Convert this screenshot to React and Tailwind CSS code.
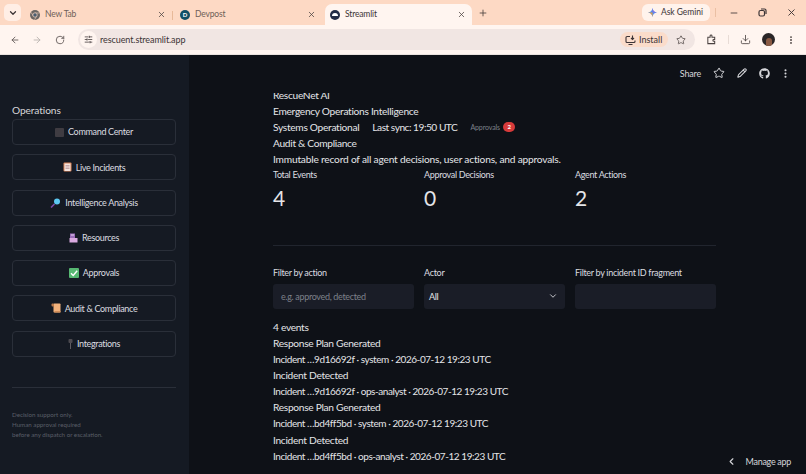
import React from 'react';
import { ArrowLeft, ArrowRight, RotateCw, X, Plus, Star, Pencil, ChevronDown, ChevronLeft, EllipsisVertical, Minus, Download, SlidersHorizontal } from 'lucide-react';
import { FaGithub } from 'react-icons/fa';

function ChromeLogo() {
  return (
    <svg width="10" height="10" viewBox="0 0 10 10">
      <circle cx="5" cy="5" r="5" fill="#6a6563" />
      <path d="M5 3h4.400M3.300 6 1.100 2.300M6.700 6 4.500 9.800" stroke="#fdd9c4" strokeWidth="0.6" />
      <circle cx="5" cy="5" r="2.200" fill="#4a5d70" stroke="#fdd9c4" strokeWidth="0.7" />
    </svg>
  );
}

function Square() {
  return <span className="w-[9px] h-[9px] rounded-[1px] bg-[#3f3c42]" />;
}

function Clipboard() {
  return (
    <svg width="9" height="10" viewBox="0 0 9 10">
      <rect x="0.5" y="0.5" width="8" height="9" rx="1" fill="#d9845a" />
      <rect x="1.5" y="1.5" width="6" height="7.5" fill="#f3e3dc" />
      <path d="M2.5 3.5h4M2.5 5h4M2.5 6.5h4" stroke="#b08a90" strokeWidth="0.7" />
    </svg>
  );
}

function Magnifier() {
  return (
    <svg width="11" height="10" viewBox="0 0 11 10">
      <path d="M1 9.5 4.5 6" stroke="#7d4aa8" strokeWidth="1.6" />
      <circle cx="7" cy="3.5" r="3" fill="#5cc8f2" />
    </svg>
  );
}

function Books() {
  return (
    <svg width="9" height="10" viewBox="0 0 9 10">
      <rect x="1" y="0.5" width="5" height="4.5" fill="#9a6bb8" />
      <rect x="0.5" y="5" width="8" height="4.5" fill="#d9a9e0" />
      <rect x="2" y="1.5" width="3" height="1" fill="#e6d2ee" />
    </svg>
  );
}

function Check() {
  return (
    <svg width="10" height="10" viewBox="0 0 10 10">
      <rect width="10" height="10" rx="1" fill="#57b872" />
      <path d="M2 5.2 4.2 7.4 8.2 2.8" stroke="#fff" strokeWidth="1.4" fill="none" />
    </svg>
  );
}

function Scroll() {
  return (
    <svg width="10" height="10" viewBox="0 0 10 10">
      <rect x="2.5" y="0.5" width="7" height="9" rx="0.8" fill="#f2b27c" />
      <rect x="0.5" y="0.5" width="2.5" height="3" rx="1" fill="#b9794a" />
      <rect x="3.5" y="8" width="6" height="1.5" fill="#d08c58" />
    </svg>
  );
}

function Pin() {
  return (
    <svg width="5" height="10" viewBox="0 0 5 10">
      <rect x="0.5" y="0" width="4" height="4" rx="1" fill="#4d4a50" />
      <rect x="2" y="4" width="1" height="6" fill="#5d5a60" />
    </svg>
  );
}

const navItems = [
  ['Command Center', <Square />],
  ['Live Incidents', <Clipboard />],
  ['Intelligence Analysis', <Magnifier />],
  ['Resources', <Books />],
  ['Approvals', <Check />],
  ['Audit & Compliance', <Scroll />],
  ['Integrations', <Pin />],
];

const events = [
  'Response Plan Generated',
  'Incident …9d16692f · system · 2026-07-12 19:23 UTC',
  'Incident Detected',
  'Incident …9d16692f · ops-analyst · 2026-07-12 19:23 UTC',
  'Response Plan Generated',
  'Incident …bd4ff5bd · system · 2026-07-12 19:23 UTC',
  'Incident Detected',
  'Incident …bd4ff5bd · ops-analyst · 2026-07-12 19:23 UTC',
];

function Tab({ icon, title, active }) {
  return (
    <div className={`w-[147px] h-[21px] flex items-center pl-[5px] pr-[6px] rounded-t-[7px] ${active ? 'bg-[#fff5f0] text-[#3c3436]' : 'text-[#6f5f58]'}`}>
      {icon}
      <span className="ml-[5px] flex-1 text-[8.5px] tracking-[-0.15px]">{title}</span>
      <X size={9} strokeWidth={2} className="text-[#4a4240]" />
    </div>
  );
}

function Line({ children, className = '' }) {
  return <div className={`h-[16.1px] leading-[16.1px] text-[#e4e5e8] whitespace-nowrap ${className}`}>{children}</div>;
}

function Metric({ label, value }) {
  return (
    <div>
      <div className="h-[16px] leading-[16px] text-[9px] tracking-[-0.33px] text-[#dcdde0]">{label}</div>
      <div className="h-[29px] leading-[29px] text-[21px] text-[#e4e5e8]">{value}</div>
    </div>
  );
}

function Field({ label, children }) {
  return (
    <div>
      <div className="h-[15px] leading-[15px] text-[9px] tracking-[-0.3px] text-[#dcdde0]">{label}</div>
      <div className="mt-[3.5px] h-[25px] rounded-[3px] bg-[#1a1d27] flex items-center text-[9px] tracking-[-0.33px]">{children}</div>
    </div>
  );
}

export default function App() {
  return (
    <div className="w-[806px] h-[474px] flex flex-col overflow-hidden bg-[#0e1117] font-['Lato',sans-serif]">
      <div className="h-[25px] bg-[#fdd9c4] flex items-end pl-[4px]">
        <div className="self-start mt-[4px] w-[17px] h-[17px] rounded-[5px] bg-[#ffeee5] flex items-center justify-center">
          <ChevronDown size={10} strokeWidth={3} className="text-[#3c3436]" />
        </div>
        <div className="ml-[4px] flex">
          <Tab title="New Tab" icon={<ChromeLogo />} />
          <div className="w-[1px] h-[9px] mt-[7px] mr-[2px] bg-[#e8b999]" />
          <Tab title="Devpost" icon={<span className="w-[10px] h-[10px] rounded-full bg-[#0f4f66] text-white text-[6px] font-bold flex items-center justify-center">D</span>} />
          <div className="w-[3px]" />
          <Tab active title="Streamlit" icon={<span className="w-[10px] h-[10px] rounded-full bg-[#222b45] flex items-center justify-center"><span className="w-[6px] h-[3px] rounded-t-full bg-white" /></span>} />
        </div>
        <Plus size={10} strokeWidth={2} className="self-start mt-[8px] ml-[6px] text-[#4a4240]" />
        <div className="flex-1" />
        <div className="self-start mt-[4px] w-[68px] h-[17px] rounded-[6px] bg-[#fff3ec] flex items-center pl-[6px] gap-[4px] text-[8.5px] tracking-[-0.05px] text-[#3c3436]">
          <svg width="9" height="9" viewBox="0 0 10 10">
            <path d="M5 0C5.4 3 7 4.6 10 5 7 5.4 5.4 7 5 10 4.6 7 3 5.4 0 5 3 4.6 4.6 3 5 0Z" fill="#4a8ef0" />
            <path d="M5 0C5.4 3 7 4.6 10 5H5Z" fill="#8c6ee0" />
            <path d="M5 10C4.6 7 3 5.4 0 5H5Z" fill="#e8a040" />
          </svg>
          Ask Gemini
        </div>
        <div className="self-start mt-[8px] ml-[5px] w-[1px] h-[9px] bg-[#eabfa3]" />
        <div className="self-start mt-[7px] flex items-center text-[#3c3436]">
          <Minus size={10} strokeWidth={2} className="ml-[13px]" />
          <svg width="9" height="9" viewBox="0 0 9 9" className="ml-[19px]" fill="none" stroke="currentColor" strokeWidth="1.2">
            <rect x="1" y="2.5" width="5.5" height="5.5" rx="1.5" />
            <path d="M3 1h3.5A1.5 1.5 0 0 1 8 2.500V6" />
          </svg>
          <X size={11} strokeWidth={2} className="ml-[19px] mr-[9px]" />
        </div>
      </div>

      <div className="h-[30px] bg-[#fff5f0] flex items-center pl-[10px] border-b border-[#e9e2de]">
        <ArrowLeft size={10} strokeWidth={2} className="text-[#5a5250]" />
        <ArrowRight size={10} strokeWidth={2} className="ml-[12px] text-[#b5aeab]" />
        <RotateCw size={10} strokeWidth={2} className="ml-[13px] text-[#5a5250]" />
        <div className="ml-[13px] w-[617px] h-[21px] rounded-full bg-[#f1e6e3] flex items-center pl-[2px] pr-[9px]">
          <div className="w-[17px] h-[17px] rounded-full bg-[#fff5f0] flex items-center justify-center">
            <SlidersHorizontal size={9} strokeWidth={2} className="text-[#3c3436]" />
          </div>
          <span className="ml-[3px] text-[9px] tracking-[-0.08px] text-[#3c3436]">rescuent.streamlit.app</span>
          <div className="flex-1" />
          <div className="w-[48px] h-[15px] rounded-full bg-[#fbdcca] flex items-center pl-[5px] gap-[3px] text-[9px] text-[#3c3436]">
            <svg width="11" height="10" viewBox="0 0 11 10" fill="none" stroke="currentColor" strokeWidth="1.1">
              <path d="M5 1.500H2a1 1 0 0 0-1 1v4a1 1 0 0 0 1 1h7a1 1 0 0 0 1-1V5.500M3.500 9.500h4M7.500 0.500v4M6 3l1.500 1.500L9 3" />
            </svg>
            Install
          </div>
          <Star size={10} strokeWidth={1.8} className="ml-[8px] text-[#4a4240]" />
        </div>
        <svg width="11" height="11" viewBox="0 0 24 24" fill="none" stroke="#4a4240" strokeWidth="2.200" className="ml-[11px]">
          <path d="M4 7h5V4a2 2 0 0 1 4 0v3h6v5h-2a2 2 0 0 0 0 4h2v5H4z" />
        </svg>
        <div className="ml-[11px] w-[1px] h-[9px] bg-[#e8dcd6]" />
        <Download size={11} strokeWidth={1.8} className="ml-[11px] text-[#4a4240]" />
        <div className="ml-[11px] w-[13px] h-[13px] rounded-full bg-[#2a2526] flex items-end justify-center overflow-hidden">
          <span className="w-[6px] h-[8px] rounded-t-full bg-[#8a5a44]" />
        </div>
        <EllipsisVertical size={10} strokeWidth={2.5} className="ml-[11px] text-[#4a4240]" />
      </div>

      <div className="flex-1 flex min-h-0 text-[10.2px] tracking-[-0.3px]">
        <aside className="w-[189px] bg-[#151a23] pl-[12px] pr-[13px] pt-[47px] flex flex-col">
          <div className="h-[16px] leading-[16px] tracking-[-0.1px] text-[#d5d6da]">Operations</div>
          <div className="mt-[1px] flex flex-col gap-[9.300px]">
            {navItems.map(([label, icon]) => (
              <div key={label} className="h-[26px] rounded-[4px] border border-[#2a2f39] flex items-center justify-center gap-[4px] text-[9px] tracking-[-0.33px] text-[#dcdde0]">
                {icon}
                <span>{label}</span>
              </div>
            ))}
          </div>
          <div className="mt-[30px] h-[1px] bg-[#2a2f39]" />
          <div className="mt-[22px] text-[6.2px] tracking-normal leading-[10.200px] text-[#5b5f68]">
            <div>Decision support only.</div>
            <div>Human approval required</div>
            <div>before any dispatch or escalation.</div>
          </div>
        </aside>

        <main className="flex-1 flex flex-col relative">
          <div className="h-[37.500px] flex items-center justify-end pr-[15px] pb-[1px] text-[#d5d6da]">
            <span className="text-[9px] tracking-[-0.2px]">Share</span>
            <Star size={12} strokeWidth={2} className="ml-[12px]" />
            <Pencil size={10} strokeWidth={2.5} className="ml-[12px]" />
            <FaGithub size={11} className="ml-[12px]" />
            <EllipsisVertical size={11} strokeWidth={2.5} className="ml-[10px]" />
          </div>

          <div className="ml-[84px] w-[443px] flex flex-col">
            <div className="h-[10.500px] overflow-hidden flex flex-col justify-end">
              <Line className="shrink-0">RescueNet AI</Line>
            </div>
            <Line>Emergency Operations Intelligence</Line>
            <Line className="flex items-center">
              <span>Systems Operational</span>
              <span className="ml-[13px] tracking-[-0.5px]">Last sync: 19:50 UTC</span>
              <span className="ml-[13px] text-[7px] tracking-[-0.1px] text-[#7d818a]">Approvals</span>
              <span className="ml-[3px] w-[12px] h-[10px] rounded-full bg-[#d63a3a] text-white text-[6px] font-bold leading-[10px] text-center">2</span>
            </Line>
            <Line>Audit &amp; Compliance</Line>
            <Line className="tracking-[-0.2px]">Immutable record of all agent decisions, user actions, and approvals.</Line>

            <div className="grid grid-cols-3 gap-[10px]">
              <Metric label="Total Events" value="4" />
              <Metric label="Approval Decisions" value="0" />
              <Metric label="Agent Actions" value="2" />
            </div>

            <div className="mt-[32.500px] h-[1px] bg-[#21252e]" />

            <div className="mt-[19.500px] grid grid-cols-3 gap-[10px]">
              <Field label="Filter by action">
                <span className="pl-[8px] text-[#7d818a]">e.g. approved, detected</span>
              </Field>
              <Field label="Actor">
                <span className="pl-[5px] flex-1 text-[#e4e5e8]">All</span>
                <ChevronDown size={10} strokeWidth={2} className="mr-[7px] text-[#e4e5e8]" />
              </Field>
              <Field label="Filter by incident ID fragment" />
            </div>

            <Line className="mt-[10px]">4 events</Line>
            {events.map((text, i) => (
              <Line key={i} className={i % 2 ? 'text-[10px] tracking-[-0.44px]' : ''}>{text}</Line>
            ))}
          </div>

          <div className="absolute right-[15px] bottom-[6px] flex items-center text-[9px] text-[#d5d6da]">
            <ChevronLeft size={11} strokeWidth={2.500} />
            <span className="ml-[9px]">Manage app</span>
          </div>
        </main>
      </div>
    </div>
  );
}
